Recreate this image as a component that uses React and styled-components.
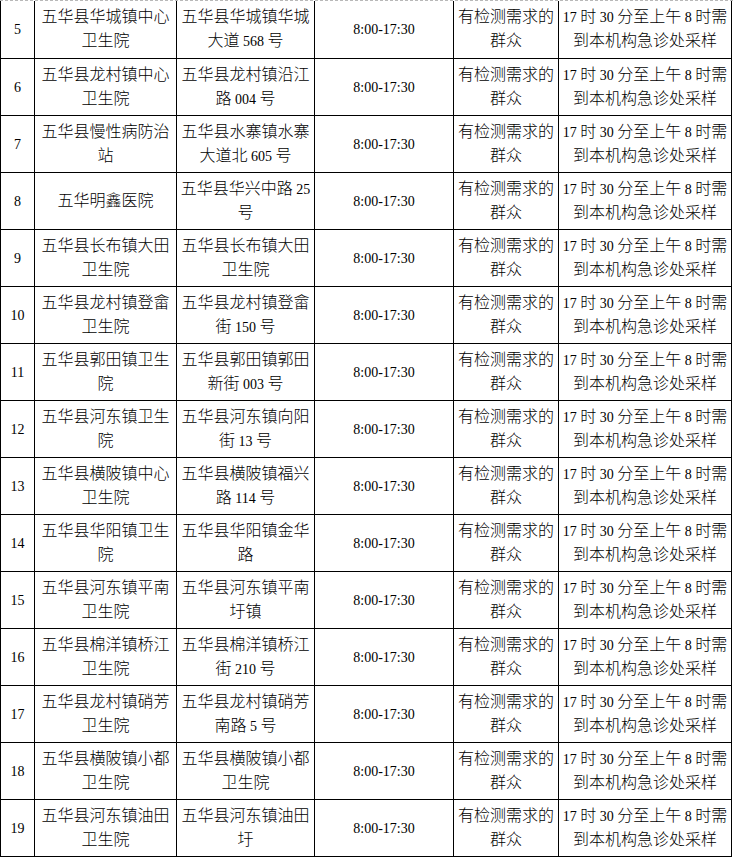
import React from "react";
import styled, { createGlobalStyle } from "styled-components";

const GlobalStyle = createGlobalStyle`
  html, body {
    margin: 0;
    padding: 0;
    background: #ffffff;
  }
`;

const Page = styled.div`
  width: 733px;
  border-top: 1px dashed #b8b8b8;
  background: #fff;
`;

const Table = styled.table`
  border-collapse: collapse;
  table-layout: fixed;
  width: 731px;
  font-family: "Liberation Serif", "Noto Sans CJK SC", serif;
  font-size: 16px;
  font-weight: 300;
  color: #000;
`;

const Col = styled.col`
  width: ${({ $w }) => $w}px;
`;

const Row = styled.tr`
  height: 57px;

  &:first-child td {
    border-top: hidden;
  }
`;

const Cell = styled.td`
  border: 1px solid #000;
  padding: 0;
  text-align: center;
  vertical-align: middle;
  line-height: 24px;
  white-space: nowrap;
  overflow: hidden;
`;

const Latin = styled.span`
  font-family: "Liberation Serif", serif;
  font-size: 14px;
  font-weight: 400;
`;

const Line = styled.div`
  height: 24px;
`;

// split a line into latin / cjk runs so digits get the smaller Times size
const renderLine = (text) =>
  text.split(/([0-9:\- ]+)/).filter(Boolean).map((part, i) =>
    /^[0-9:\- ]+$/.test(part) ? <Latin key={i}>{part}</Latin> : <span key={i}>{part}</span>
  );

const Lines = ({ lines }) => (
  <>
    {lines.map((l, i) => (
      <Line key={i}>{renderLine(l)}</Line>
    ))}
  </>
);

const widths = [34, 142, 138, 139, 105, 173];

const rows = [
  { no: "5", name: ["五华县华城镇中心", "卫生院"], addr: ["五华县华城镇华城", "大道 568 号"] },
  { no: "6", name: ["五华县龙村镇中心", "卫生院"], addr: ["五华县龙村镇沿江", "路 004 号"] },
  { no: "7", name: ["五华县慢性病防治", "站"], addr: ["五华县水寨镇水寨", "大道北 605 号"] },
  { no: "8", name: ["五华明鑫医院"], addr: ["五华县华兴中路 25", "号"] },
  { no: "9", name: ["五华县长布镇大田", "卫生院"], addr: ["五华县长布镇大田", "卫生院"] },
  { no: "10", name: ["五华县龙村镇登畲", "卫生院"], addr: ["五华县龙村镇登畲", "街 150 号"] },
  { no: "11", name: ["五华县郭田镇卫生", "院"], addr: ["五华县郭田镇郭田", "新街 003 号"] },
  { no: "12", name: ["五华县河东镇卫生", "院"], addr: ["五华县河东镇向阳", "街 13 号"] },
  { no: "13", name: ["五华县横陂镇中心", "卫生院"], addr: ["五华县横陂镇福兴", "路 114 号"] },
  { no: "14", name: ["五华县华阳镇卫生", "院"], addr: ["五华县华阳镇金华", "路"] },
  { no: "15", name: ["五华县河东镇平南", "卫生院"], addr: ["五华县河东镇平南", "圩镇"] },
  { no: "16", name: ["五华县棉洋镇桥江", "卫生院"], addr: ["五华县棉洋镇桥江", "街 210 号"] },
  { no: "17", name: ["五华县龙村镇硝芳", "卫生院"], addr: ["五华县龙村镇硝芳", "南路 5 号"] },
  { no: "18", name: ["五华县横陂镇小都", "卫生院"], addr: ["五华县横陂镇小都", "卫生院"] },
  { no: "19", name: ["五华县河东镇油田", "卫生院"], addr: ["五华县河东镇油田", "圩"] },
];

const hours = ["8:00-17:30"];
const target = ["有检测需求的", "群众"];
const remark = ["17 时 30 分至上午 8 时需", "到本机构急诊处采样"];

const App = () => {
  return (
    <>
      <GlobalStyle />
      <Page>
        <Table>
          <colgroup>
            {widths.map((w, i) => (
              <Col key={i} $w={w} />
            ))}
          </colgroup>
          <tbody>
            {rows.map((r) => (
              <Row key={r.no}>
                <Cell><Lines lines={[r.no]} /></Cell>
                <Cell><Lines lines={r.name} /></Cell>
                <Cell><Lines lines={r.addr} /></Cell>
                <Cell><Lines lines={hours} /></Cell>
                <Cell><Lines lines={target} /></Cell>
                <Cell><Lines lines={remark} /></Cell>
              </Row>
            ))}
          </tbody>
        </Table>
      </Page>
    </>
  );
};

export default App;
